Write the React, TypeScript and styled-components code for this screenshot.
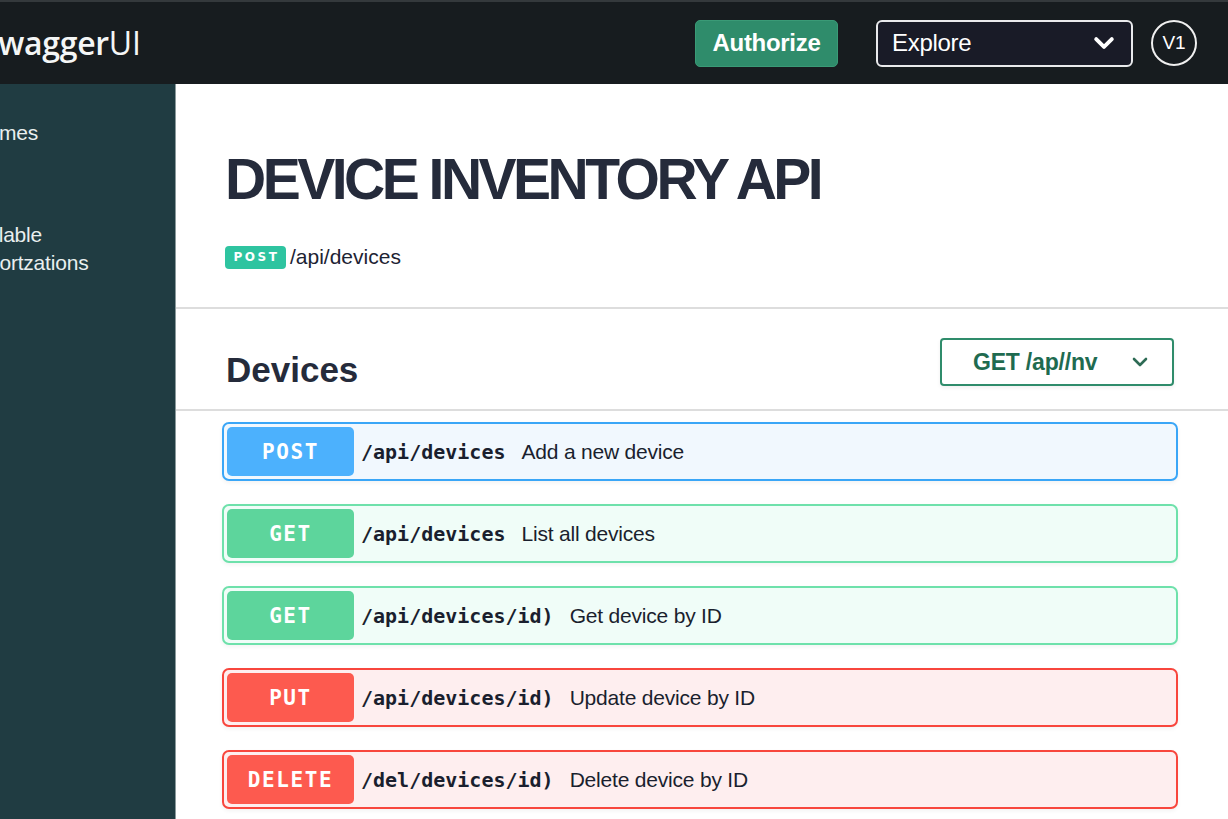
import React from "react";
import styled, { createGlobalStyle } from "styled-components";

const GlobalStyle = createGlobalStyle`
  html, body {
    margin: 0;
    padding: 0;
    background: #ffffff;
    font-family: "Liberation Sans", Arial, sans-serif;
  }
  * {
    box-sizing: border-box;
  }
`;

const Page = styled.div`
  width: 1228px;
  height: 819px;
  overflow: hidden;
  display: flex;
  flex-direction: column;
`;

const TopBar = styled.header`
  height: 84px;
  flex-shrink: 0;
  background: #171c1f;
  border-top: 2px solid #34393c;
  display: flex;
  align-items: center;
  padding-right: 31px;
`;

const Brand = styled.div`
  margin-left: -17px;
  font-family: "Open Sans", sans-serif;
  font-size: 32px;
  font-weight: 600;
  color: #f4f6f6;
  letter-spacing: -0.3px;
  margin-top: -2px;

  span {
    font-weight: 400;
  }
`;

const Spacer = styled.div`
  flex: 1;
`;

const AuthorizeButton = styled.button`
  height: 47px;
  width: 143px;
  border: 1px solid #3a9a76;
  border-radius: 5px;
  background: #2f8c6b;
  color: #ffffff;
  font-family: "Liberation Sans", Arial, sans-serif;
  font-size: 24px;
  font-weight: 700;
  letter-spacing: -0.3px;
  cursor: pointer;
`;

const ExploreSelect = styled.div`
  margin-left: 38px;
  width: 257px;
  height: 47px;
  border: 2px solid #e9eaec;
  border-radius: 6px;
  background: #191b27;
  display: flex;
  align-items: center;
  justify-content: space-between;
  padding: 0 14px 0 14px;
  color: #ffffff;
  font-size: 24px;
  letter-spacing: -0.3px;
`;

const VersionBadge = styled.div`
  margin-left: 18px;
  width: 46px;
  height: 46px;
  border: 2px solid #f0f0f0;
  border-radius: 50%;
  display: flex;
  align-items: center;
  justify-content: center;
  color: #ffffff;
  font-size: 19px;
`;

const Body = styled.div`
  flex: 1;
  display: flex;
  min-height: 0;
`;

const Sidebar = styled.aside`
  width: 176px;
  flex-shrink: 0;
  background: #203c42;
  border-right: 1px solid #8b9a9c;
  overflow: hidden;
  padding-top: 35px;
`;

const SideItem = styled.div<{ $shift: number; $gap?: number }>`
  margin-left: ${(p) => -p.$shift}px;
  margin-top: ${(p) => p.$gap ?? 0}px;
  white-space: nowrap;
  color: #e9efef;
  font-size: 21px;
  line-height: 28px;
  letter-spacing: -0.2px;
`;

const Main = styled.main`
  flex: 1;
  display: flex;
  flex-direction: column;
  background: #ffffff;
`;

const Hero = styled.section`
  height: 225px;
  padding: 62px 0 0 49px;
  border-bottom: 2px solid #dddddd;
`;

const Title = styled.h1`
  margin: 0;
  font-size: 57px;
  line-height: 66px;
  font-weight: 700;
  letter-spacing: -3.5px;
  color: #252b3b;
`;

const EndpointLine = styled.div`
  margin-top: 33px;
  display: flex;
  align-items: center;
  gap: 4px;
  font-size: 21px;
  color: #1d2333;
`;

const SmallBadge = styled.span`
  width: 61px;
  height: 23px;
  border-radius: 4px;
  background: #2ec4a0;
  color: #ffffff;
  font-family: "DejaVu Sans", sans-serif;
  font-size: 12px;
  font-weight: 700;
  letter-spacing: 2.6px;
  display: flex;
  align-items: center;
  justify-content: center;
  padding-left: 2px;
`;

const SectionHeader = styled.section`
  height: 102px;
  flex-shrink: 0;
  display: flex;
  align-items: center;
  justify-content: space-between;
  padding: 0 54px 0 50px;
  border-bottom: 2px solid #dddddd;
`;

const SectionTitle = styled.h2`
  margin: 22px 0 0;
  font-size: 35px;
  font-weight: 700;
  color: #252b3b;
`;

const FilterSelect = styled.div`
  width: 234px;
  height: 48px;
  margin-top: 6px;
  border: 2px solid #2f8c6b;
  border-radius: 4px;
  display: flex;
  align-items: center;
  justify-content: space-between;
  padding: 0 22px 0 31px;
  color: #1f6b50;
  font-size: 23px;
  font-weight: 700;
  letter-spacing: -0.2px;
  box-shadow: 0 2px 4px rgba(0, 0, 0, 0.06);
`;

const OperationList = styled.div`
  display: flex;
  flex-direction: column;
  gap: 23px;
  padding: 11px 50px 0 46px;
`;

type Method = "POST" | "GET" | "PUT" | "DELETE";

const palette: Record<Method, { badge: string; border: string; bg: string }> = {
  POST: { badge: "#4cb1fd", border: "#3aa6f7", bg: "#f1f8fe" },
  GET: { badge: "#5dd59c", border: "#6ee1ab", bg: "#f0fdf8" },
  PUT: { badge: "#fd5a4f", border: "#f8463d", bg: "#feeeef" },
  DELETE: { badge: "#fd5a4f", border: "#f8463d", bg: "#feeeef" },
};

const OperationRow = styled.div<{ $method: Method }>`
  height: 59px;
  display: flex;
  align-items: center;
  padding: 0 3px;
  border: 2px solid ${(p) => palette[p.$method].border};
  border-radius: 7px;
  background: ${(p) => palette[p.$method].bg};
  box-shadow: 0 2px 4px rgba(0, 0, 0, 0.05);
`;

const MethodBadge = styled.span<{ $method: Method }>`
  width: 127px;
  height: 49px;
  flex-shrink: 0;
  border-radius: 5px;
  background: ${(p) => palette[p.$method].badge};
  color: #ffffff;
  font-family: "DejaVu Sans Mono", monospace;
  font-size: 21px;
  font-weight: 700;
  letter-spacing: 1.6px;
  display: flex;
  align-items: center;
  justify-content: center;
`;

const OperationPath = styled.span`
  margin-left: 7px;
  font-family: "DejaVu Sans Mono", monospace;
  font-size: 20px;
  font-weight: 700;
  color: #1a1f2e;
`;

const OperationSummary = styled.span`
  margin-left: 16px;
  font-size: 21px;
  color: #1a1f2e;
  letter-spacing: -0.2px;
`;

const Chevron: React.FC<{ size: number; color: string; weight: number }> = ({
  size,
  color,
  weight,
}) => (
  <svg width={size} height={size} viewBox="0 0 20 20" fill="none">
    <polyline
      points="4 7 10 13 16 7"
      stroke={color}
      strokeWidth={weight}
      strokeLinecap="round"
      strokeLinejoin="round"
    />
  </svg>
);

const operations: { method: Method; path: string; summary: string }[] = [
  { method: "POST", path: "/api/devices", summary: "Add a new device" },
  { method: "GET", path: "/api/devices", summary: "List all devices" },
  { method: "GET", path: "/api/devices/id)", summary: "Get device by ID" },
  { method: "PUT", path: "/api/devices/id)", summary: "Update device by ID" },
  { method: "DELETE", path: "/del/devices/id)", summary: "Delete device by ID" },
];

const App: React.FC = () => {
  return (
    <Page>
      <GlobalStyle />
      <TopBar>
        <Brand>
          swagger<span>UI</span>
        </Brand>
        <Spacer />
        <AuthorizeButton>Authorize</AuthorizeButton>
        <ExploreSelect>
          Explore
          <Chevron size={26} color="#ffffff" weight={3} />
        </ExploreSelect>
        <VersionBadge>V1</VersionBadge>
      </TopBar>
      <Body>
        <Sidebar>
          <SideItem $shift={48}>Schemes</SideItem>
          <SideItem $shift={41} $gap={74}>
            Available
          </SideItem>
          <SideItem $shift={43}>Authortzations</SideItem>
        </Sidebar>
        <Main>
          <Hero>
            <Title>DEVICE INVENTORY API</Title>
            <EndpointLine>
              <SmallBadge>POST</SmallBadge>
              /api/devices
            </EndpointLine>
          </Hero>
          <SectionHeader>
            <SectionTitle>Devices</SectionTitle>
            <FilterSelect>
              GET /ap//nv
              <Chevron size={20} color="#2e6b55" weight={2.6} />
            </FilterSelect>
          </SectionHeader>
          <OperationList>
            {operations.map((op, i) => (
              <OperationRow key={i} $method={op.method}>
                <MethodBadge $method={op.method}>{op.method}</MethodBadge>
                <OperationPath>{op.path}</OperationPath>
                <OperationSummary>{op.summary}</OperationSummary>
              </OperationRow>
            ))}
          </OperationList>
        </Main>
      </Body>
    </Page>
  );
};

export default App;
